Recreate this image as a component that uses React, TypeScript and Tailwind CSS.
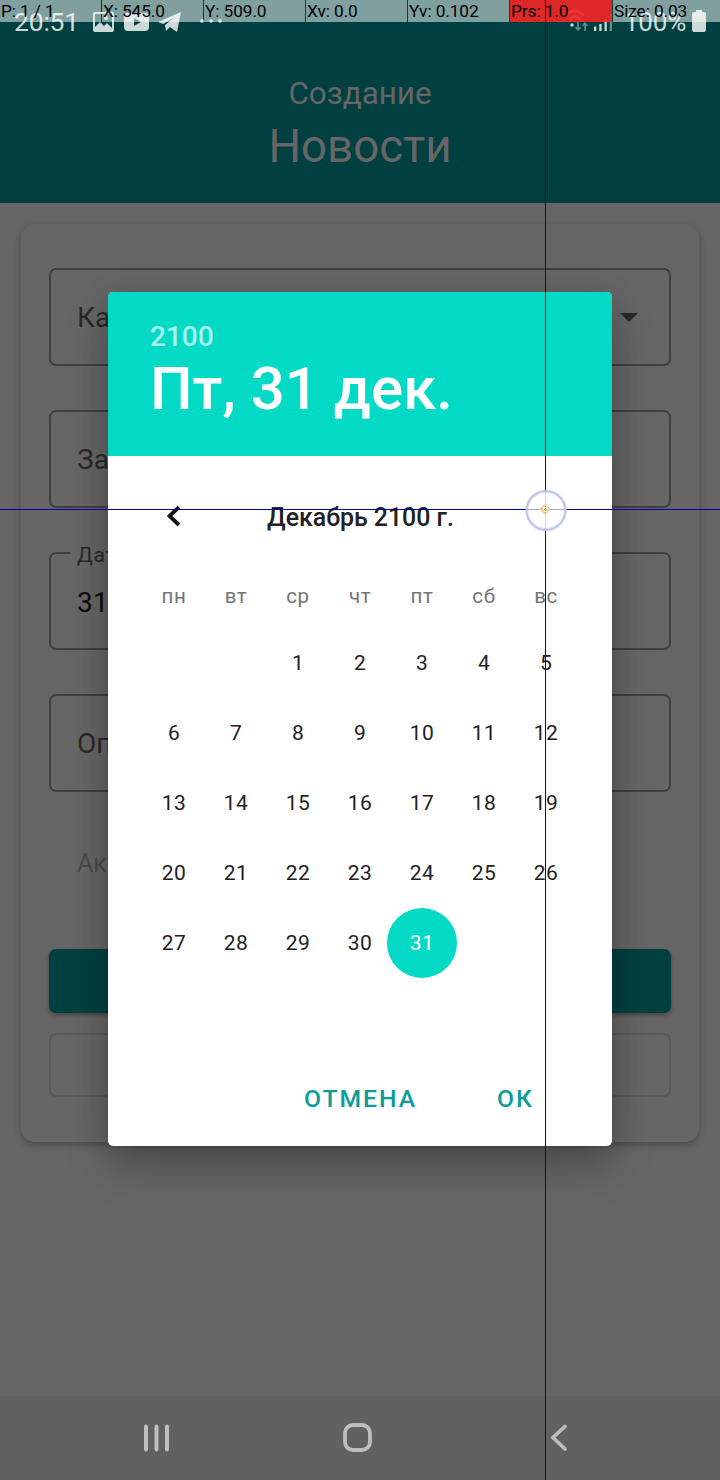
import React from "react";

const weekdays = ["пн", "вт", "ср", "чт", "пт", "сб", "вс"];
const days: (number | null)[] = [null, null, ...Array.from({ length: 31 }, (_, i) => i + 1)];

function StatusBar() {
  return (
    <div className="flex h-[44px] w-full items-center justify-between pl-[14px] pr-[13px] text-[#ccd9d9]">
      <div className="flex items-center">
        <span className="w-[78px] text-[26.5px] leading-[44px] tracking-[-0.2px]">20:51</span>
        <svg width="23" height="22" viewBox="0 0 23 22" className="mr-[9px]">
          <path fillRule="evenodd" fill="currentColor" d="M3 1h17a2 2 0 0 1 2 2v16a2 2 0 0 1-2 2H3a2 2 0 0 1-2-2V3a2 2 0 0 1 2-2zm0 2v13l5-5 4 4 3-3 5 5V3zm11 2a2 2 0 1 1 0 4 2 2 0 0 1 0-4z" />
        </svg>
        <svg width="25" height="18" viewBox="0 0 25 18" className="mr-[9px]">
          <path fillRule="evenodd" fill="currentColor" d="M4 0h17q4 0 4 4v10q0 4-4 4H4q-4 0-4-4V4q0-4 4-4zm6 5v8l7-4z" />
        </svg>
        <svg width="24" height="21" viewBox="0 0 24 21" className="mr-[18px]">
          <path fill="currentColor" d="M0 10 L23 0 L19 20 L12 15 L8 19 L7 13 L17 5 L5 12 Z" />
        </svg>
        <svg width="24" height="4" viewBox="0 0 24 4" fill="currentColor" className="mb-[2px]">
          <circle cx="2" cy="2" r="1.8" /><circle cx="11" cy="2" r="1.8" /><circle cx="20" cy="2" r="1.8" />
        </svg>
      </div>
      <div className="flex items-center">
        <svg width="50" height="28" viewBox="567 8 50 28" className="mr-[9px]">
          <g fill="none" stroke="#809f9f" strokeWidth="2.4">
            <path d="M568 16Q577 5.500 586 16" /><path d="M571 20Q577 13 583 20" />
          </g>
          <circle cx="574" cy="25" r="1.700" fill="currentColor" />
          <path fill="none" stroke="#668c8c" strokeWidth="1.6" d="M580 22v8M577.500 27.300l2.500 2.500 2.500-2.500M587 31v-8M584.500 25.700L587 23.200l2.500 2.500" />
          <path fill="currentColor" d="M596 26.500h2.300V31H596zM601.300 24h2.300v7h-2.300zM606.500 20h2.300v11h-2.300z" />
          <path fill="#668c8c" d="M611.700 14h2.300v17h-2.300z" />
        </svg>
        <span className="mr-[6px] text-[26px] leading-[44px] tracking-[-0.2px]">100%</span>
        <svg width="15" height="22" viewBox="0 0 15 22" fill="currentColor" className="mb-[3px]">
          <path d="M4 0h6v2h2q2 0 2 2v16q0 2-2 2H2q-2 0-2-2V4q0-2 2-2h2z" />
        </svg>
      </div>
    </div>
  );
}

function Field({ label, dropdown }: { label: string; dropdown?: boolean }) {
  return (
    <div className="flex h-[98px] w-full items-center justify-between rounded-[7px] border-2 border-[#3f3f3f] pl-[26px] pr-[31px] text-[28px] text-[#292929]">
      <span className="pt-[2px]">{label}</span>
      {dropdown && (
        <svg width="18" height="9" viewBox="0 0 18 9"><path d="M0 0h18L9 9z" fill="#292929" /></svg>
      )}
    </div>
  );
}

function DateField() {
  return (
    <fieldset className="mt-[-10px] h-[108px] w-full rounded-[7px] border-2 border-[#3f3f3f] pl-[19px]">
      <legend className="h-[22px] px-[7px] text-[21px] leading-[26px] tracking-[0.8px] text-[#292929]">Дата</legend>
      <div className="pl-[7px] pt-[21px] text-[28px] leading-[36px] text-[#0c0c0c]">31.12.2100</div>
    </fieldset>
  );
}

function Screen() {
  return (
    <div className="flex h-full w-full flex-col bg-[#666666]">
      <header className="flex h-[203px] shrink-0 flex-col items-center bg-[#004040] text-[#666666]">
        <StatusBar />
        <div className="mt-[30px] text-[31.400px] leading-[40px]">Создание</div>
        <div className="mt-[5px] text-[45.700px] leading-[56px]">Новости</div>
      </header>
      <main className="flex grow flex-col px-[21px] pt-[21px]">
        <section className="flex h-[918px] flex-col rounded-[14px] bg-[#666666] px-[28px] pt-[44px] shadow-[0_3px_7px_rgba(0,0,0,0.27)]">
          <div className="flex flex-col gap-[44px]">
            <Field label="Категория" dropdown />
            <Field label="Заголовок" />
            <DateField />
            <Field label="Описание" />
          </div>
          <div className="mt-[52px] h-[40px] pl-[28px] text-[25px] leading-[40px] text-[#4a4a4a]">Активна</div>
          <div className="mt-[65px] h-[64px] shrink-0 rounded-[7px] bg-[#004040] shadow-[0_2px_4px_rgba(0,0,0,0.35)]" />
          <div className="mt-[20px] h-[64px] shrink-0 rounded-[7px] border-2 border-[#5a5a5a]" />
        </section>
      </main>
      <nav className="flex h-[84px] shrink-0 items-center bg-[#616161] pl-[143px]">
        <svg width="27" height="28" viewBox="0 0 27 28" className="mr-[173px]" stroke="#bebebe" strokeWidth="4" strokeLinecap="round">
          <path d="M3 2.500v23M13.500 2.500v23M24 2.500v23" />
        </svg>
        <svg width="30" height="30" viewBox="0 0 30 30" className="mr-[177px]" fill="none" stroke="#bebebe" strokeWidth="3.800">
          <rect x="2" y="2" width="25" height="25" rx="8" />
        </svg>
        <svg width="18" height="28" viewBox="0 0 18 28" fill="none" stroke="#bebebe" strokeWidth="3.600" strokeLinecap="round">
          <path d="M15 2.500L3 13.500l12 11.500" />
        </svg>
      </nav>
    </div>
  );
}

function DateDialog() {
  return (
    <div className="flex h-[854px] w-[504px] flex-col overflow-hidden rounded-[5px] bg-white">
      <div className="h-[164px] shrink-0 bg-[#03dac6] pl-[42px] pt-[28px] font-medium text-white">
        <div className="text-[28px] leading-[34px] text-[#a6f3ec]">2100</div>
        <div className="text-[60px] leading-[70px]">Пт, 31 дек.</div>
      </div>
      <div className="box-content flex h-[56px] items-center pb-[2px] pl-[58px] pr-[60px] pt-[32px]">
        <svg width="15" height="22" viewBox="0 0 15 22" fill="none" stroke="#151515" strokeWidth="3.800"><path d="M13 2L3.500 11l9.500 9" /></svg>
        <div className="grow pr-[12px] pt-[3px] text-center text-[24.900px] font-medium leading-[34px] text-[#212121]">Декабрь 2100 г.</div>
      </div>
      <div className="mt-[20px] grid grid-cols-7 px-[35px] text-center text-[20.500px] leading-[60px] tracking-[0.600px] text-[#757575]">
        {weekdays.map((d) => <span key={d}>{d}</span>)}
      </div>
      <div className="mt-[2px] grid grid-cols-7 px-[35px] text-[21px] tracking-[0.400px] text-[#212121]">
        {days.map((d, i) => (
          <div key={i} className="flex h-[70px] items-center justify-center">
            {d === 31 ? (
              <span className="-mx-[5px] flex size-[70px] shrink-0 items-center justify-center rounded-full bg-[#03dac6] pt-[2px] text-white">31</span>
            ) : <span className="pt-[2px]">{d}</span>}
          </div>
        ))}
      </div>
      <div className="mt-[103px] flex pl-[196px] text-[24.700px] font-medium leading-[36px] tracking-[2px] text-[#0a9d99]">
        <span className="w-[193px]">ОТМЕНА</span>
        <span>ОК</span>
      </div>
    </div>
  );
}

function Readout({ text, width, active }: { text: string; width: string; active?: boolean }) {
  return (
    <div className={`${width} ${active ? "bg-[rgba(255,37,37,0.87)]" : "bg-white/50"} mr-px h-[22px] shrink-0 overflow-visible whitespace-nowrap pl-px text-[17.300px] leading-[23px] tracking-[-0.100px] text-black`}>
      {text}
    </div>
  );
}

export default function App() {
  return (
    <div className="relative h-[1480px] w-[720px] overflow-hidden font-['Roboto',sans-serif]">
      <Screen />
      <div className="absolute left-[108px] top-[292px] rounded-[5px] shadow-[0_20px_40px_rgba(0,0,0,0.25),0_0_30px_rgba(0,0,0,0.1)]">
        <DateDialog />
      </div>
      <div className="absolute left-0 top-0 flex w-[720px]">
        <Readout text="P: 1 / 1" width="w-[101px]" />
        <Readout text="X: 545.0" width="w-[101px]" />
        <Readout text="Y: 509.0" width="w-[101px]" />
        <Readout text="Xv: 0.0" width="w-[101px]" />
        <Readout text="Yv: 0.102" width="w-[101px]" />
        <Readout text="Prs: 1.0" width="w-[102px]" active />
        <Readout text="Size: 0.03" width="w-[107px]" />
      </div>
      <div className="absolute left-[545px] top-0 h-[1480px] w-px bg-[#0000a0]" />
      <div className="absolute left-0 top-[509px] h-px w-[720px] bg-[#0000a0]" />
      <svg className="absolute left-[522px] top-[487px]" width="48" height="48" viewBox="0 0 48 48" fill="none">
        <path d="M5 22.500h38M23.500 5v37" stroke="#fff" strokeOpacity="0.65" />
        <circle cx="24" cy="23.500" r="19.300" stroke="#b8bfe8" strokeOpacity="0.4" strokeWidth="3.600" />
        <circle cx="24" cy="23.500" r="19.300" stroke="#b8c0e6" strokeWidth="1.400" />
        <path d="M23.500 5v36" stroke="#dfdca8" />
        <path d="M23 17.500l4.500 4.500-4.500 5-4.500-5z" fill="#fff2c8" stroke="#f2c99c" strokeWidth="1.500" strokeLinejoin="round" />
        <path d="M20 22.500h6M23.500 19v7" stroke="#b59b70" strokeDasharray="1 1" />
      </svg>
    </div>
  );
}
